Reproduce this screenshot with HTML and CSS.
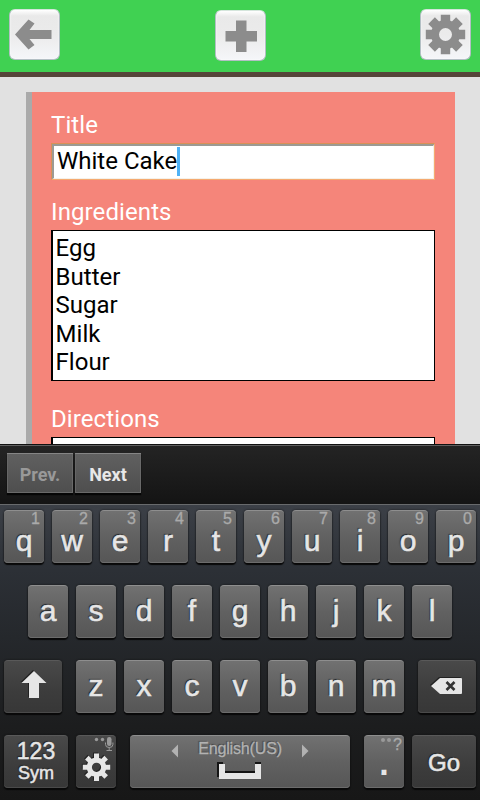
FILE: index.html
```html
<!DOCTYPE html>
<html lang="en">
  <head>
    <meta charset="utf-8" />
    <title>Edit recipe</title>
    <link rel="stylesheet" href="styles.css">
  </head>

  <body>
    <div class="screen">
      <header class="header">
        <div class="header-btn">
          <svg width="51" height="51" viewBox="0 0 51 51">
            <path d="M6 25.500L19.500 10.500L25.500 14.500L20.500 21H42.500V30H20.500L25.500 36L19.500 40.500Z" />
          </svg>
        </div>
        <div class="header-btn header-btn-add">
          <svg width="51" height="51" viewBox="0 0 51 51">
            <path d="M21 10.500h10.500v10.500h10.500v10.500h-10.500v10.500h-10.500v-10.500h-10.500v-10.500h10.500z" />
          </svg>
        </div>
        <div class="header-btn">
          <svg width="51" height="51" viewBox="0 0 51 51">
            <g transform="translate(25.500 25.500)">
              <circle r="10.500" fill="none" stroke="#8c8c8c" stroke-width="8" />
              <path id="tooth" d="M-4.700 -19.700h9.400v8h-9.400zM-4.700 11.700h9.400v8h-9.400z" />
              <use href="#tooth" transform="rotate(45)" />
              <use href="#tooth" transform="rotate(90)" />
              <use href="#tooth" transform="rotate(135)" />
            </g>
          </svg>
        </div>
      </header>

      <main class="content">
        <form class="recipe">
          <div class="label">Title</div>
          <div class="title-input"><span>White Cake</span><i class="caret"></i></div>
          <div class="label label-ingredients">Ingredients</div>
          <div class="textarea">Egg<br />Butter<br />Sugar<br />Milk<br />Flour</div>
          <div class="label label-directions">Directions</div>
          <div class="textarea"></div>
        </form>
      </main>

      <div class="assist">
        <div class="assist-btn disabled">Prev.</div>
        <div class="assist-btn">Next</div>
      </div>

      <div class="keyboard">
        <div class="row row-top">
          <div class="key">q<span class="hint">1</span></div>
          <div class="key">w<span class="hint">2</span></div>
          <div class="key">e<span class="hint">3</span></div>
          <div class="key">r<span class="hint">4</span></div>
          <div class="key">t<span class="hint">5</span></div>
          <div class="key">y<span class="hint">6</span></div>
          <div class="key">u<span class="hint">7</span></div>
          <div class="key">i<span class="hint">8</span></div>
          <div class="key">o<span class="hint">9</span></div>
          <div class="key">p<span class="hint">0</span></div>
        </div>

        <div class="row row-home">
          <div class="key">a</div>
          <div class="key">s</div>
          <div class="key">d</div>
          <div class="key">f</div>
          <div class="key">g</div>
          <div class="key">h</div>
          <div class="key">j</div>
          <div class="key">k</div>
          <div class="key">l</div>
        </div>

        <div class="row">
          <div class="key dark key-shift">
            <svg class="icon" width="58" height="53" viewBox="0 0 58 53">
              <path d="M30 11L42.500 23H35V38H25V23H17.500Z" />
            </svg>
          </div>
          <div class="key">z</div>
          <div class="key">x</div>
          <div class="key">c</div>
          <div class="key">v</div>
          <div class="key">b</div>
          <div class="key">n</div>
          <div class="key">m</div>
          <div class="key dark key-delete">
            <svg class="icon" width="58" height="53" viewBox="0 0 58 53">
              <path d="M13 26L22 18H43Q44 18 44 19V33Q44 34 43 34H22Z" />
              <path class="cross" d="M28.500 22L36.500 30M36.500 22L28.500 30" />
            </svg>
          </div>
        </div>

        <div class="row">
          <div class="key dark key-sym"><span class="num">123</span><span class="sym">Sym</span></div>
          <div class="key dark">
            <svg class="icon" width="40" height="53" viewBox="0 0 40 53">
              <g transform="translate(20.500 32.300)">
                <circle r="7.200" fill="none" stroke="#e6e6e6" stroke-width="5.200" />
                <path id="cog" d="M-2.500 -13.700h5v6h-5zM-2.500 7.700h5v6h-5z" />
                <use href="#cog" transform="rotate(45)" />
                <use href="#cog" transform="rotate(90)" />
                <use href="#cog" transform="rotate(135)" />
              </g>
            </svg>
            <svg class="mic" width="20" height="15" viewBox="0 0 20 15">
              <circle cx="2.500" cy="3.500" r="1.700" />
              <circle cx="8.500" cy="3.500" r="1.700" />
              <rect x="13" y="1" width="4.500" height="9" rx="2.200" />
              <path d="M11.500 6.500v2q0 3 3.700 3t3.700 -3v-2M15.200 11.500v2.500M12.500 14.500h5.500" fill="none" stroke="#999" />
            </svg>
          </div>
          <div class="key key-space">
            <div class="language">
              <svg width="8" height="14" viewBox="0 0 8 14"><path d="M7 0.500V13.500L0.500 7Z" /></svg>
              <span>English(US)</span>
              <svg width="8" height="14" viewBox="0 0 8 14"><path d="M1 0.500V13.500L7.500 7Z" /></svg>
            </div>
            <svg class="space-icon" width="46" height="18" viewBox="0 0 46 18">
              <path class="space-shadow" d="M0 0h6v9h32v-9h6v15h-44z" />
              <path d="M2 2h6v9h30v-9h6v15h-42z" />
            </svg>
          </div>
          <div class="key key-dot">.<span class="hint hint-dot"><i></i><i></i>?</span></div>
          <div class="key dark key-go">Go</div>
        </div>
      </div>
    </div>
  </body>
</html>
```

FILE: styles.css
```css
:root {
  --font: Roboto, Arial, sans-serif;
  --key-font: "Liberation Sans", Arial, sans-serif;
}

* {
  box-sizing: border-box;
}

body {
  margin: 0;
  font-family: var(--font);
}

.screen {
  display: flex;
  flex-direction: column;
  width: 480px;
  height: 800px;
  overflow: hidden;
  background: #e1e1e1;
}

.header {
  display: flex;
  flex: none;
  justify-content: space-between;
  height: 77px;
  padding: 9px 9px 0;
  background: #40d152;
  border-bottom: 5px solid #56453a;
}

.header-btn {
  width: 51px;
  height: 51px;
  border: 1px solid #b3bfc4;
  border-top-color: #d5e5dc;
  border-radius: 6px;
  background: linear-gradient(#fff, #e9e9e9 12%, #ebebeb 50%, #f5f6f9);
  box-shadow: inset 0 0 2px #fff;
}

.header-btn svg {
  display: block;
  margin: -1px;
  fill: #8c8c8c;
}

.header-btn-add {
  margin-top: 1px;
}

.content {
  flex: 1;
  min-height: 0;
  overflow: hidden;
  padding: 15px 25px 0 26px;
}

.recipe {
  height: 600px;
  padding: 19px 20px 0 19px;
  border-left: 6px solid #aaa;
  background: #f5857a;
}

.label {
  height: 32px;
  font-size: 24px;
  line-height: 28px;
  letter-spacing: 0.1px;
  color: #fff;
}

.label-ingredients {
  height: 32px;
  margin-top: 18px;
}

.label-directions {
  margin-top: 24px;
}

.title-input {
  display: flex;
  height: 37px;
  padding: 1px 0 0 3px;
  border: 3px solid;
  border-color: #9c9a94 #f5f1ea #f5f1ea #9c9a94;
  border-bottom-width: 2px;
  border-right-width: 2px;
  background: #fff;
  outline: 1px solid rgba(245, 140, 60, 0.7);
  outline-offset: -1px;
  font-size: 24px;
  line-height: 28px;
}

.caret {
  width: 3px;
  height: 29px;
  background: #4fb2f6;
}

.textarea {
  height: 151px;
  padding: 3.4px 3px 3px 2.6px;
  border: 1px solid #000;
  border-left-width: 2px;
  background: #fff;
  font-size: 24px;
  line-height: 28.4px;
}

/* form assistant above the keyboard */
.assist {
  display: flex;
  flex: none;
  gap: 2px;
  height: 60px;
  padding: 7px;
  border-top: 1px solid #111;
  background: linear-gradient(#242424, #141414);
  box-shadow: inset 0 1px #606060;
}

.assist-btn {
  width: 66px;
  height: 40px;
  margin-top: 1px;
  border-top: 1px solid #858585;
  background: linear-gradient(#606060, #4e4e4e);
  box-shadow: 0 2px 1px #050505, inset 1px 0 #666, inset -1px -1px #696969;
  font-size: 18px;
  font-weight: 700;
  line-height: 42px;
  text-align: center;
  color: #e8e8e8;
}

.assist-btn.disabled {
  color: #999;
}

.keyboard {
  display: flex;
  flex: none;
  flex-direction: column;
  gap: 22px;
  height: 296px;
  padding: 5px 4px 0;
  border-top: 1px solid #686a6c;
  background: linear-gradient(#3c4047, #2c3036 22%, #25282c 45%, #1c1d1e 75%, #171717);
}

.row {
  display: flex;
  justify-content: space-between;
  height: 53px;
}

.row-home {
  padding: 0 24px;
}

.key {
  position: relative;
  width: 40px;
  height: 53px;
  border-top: 1px solid #8e8e8e;
  border-radius: 4px;
  background: linear-gradient(#717171, #616161 50%, #565656);
  box-shadow: 0 2px 1px #080808, 0 0 2px #111, inset 0 -1px #6c6c6c;
  font-family: var(--key-font);
  font-size: 30px;
  line-height: 50px;
  text-align: center;
  color: #e6e6e6;
  -webkit-text-stroke: 0.6px #e6e6e6;
  text-shadow: -1px -1px 1px #222;
}

.row-top .key {
  line-height: 60px;
}

.hint {
  position: absolute;
  top: -1px;
  right: 4px;
  font-size: 16px;
  line-height: 17px;
  color: #aaa;
  -webkit-text-stroke: 0.3px #aaa;
  text-shadow: none;
}

.dark {
  border-top-color: #595959;
  background: linear-gradient(#494949, #3c3c3c 60%, #373737);
  box-shadow: 0 2px 1px #080808, 0 0 2px #111, inset 0 -1px #4a4a4a;
}

.key svg {
  fill: #e6e6e6;
}

.icon {
  display: block;
  margin-top: -1px;
  filter: drop-shadow(-1px -1px 0 #222);
}

.key .cross {
  stroke: #333;
  stroke-width: 2.6;
}

.key-shift {
  width: 58px;
  margin-right: 6px;
}

.key-delete {
  width: 58px;
  margin-left: 6px;
}

.key-sym {
  display: flex;
  flex-direction: column;
  align-items: center;
  width: 64px;
  padding-top: 2px;
  -webkit-text-stroke-width: 0.5px;
}

.num {
  font-size: 23px;
  line-height: 26px;
}

.sym {
  font-size: 18px;
  line-height: 18px;
}

.key .mic {
  position: absolute;
  top: 0;
  right: 2px;
  fill: #999;
}

.key-space {
  width: 220px;
  margin: 0 6px;
}

.language {
  display: flex;
  align-items: center;
  justify-content: space-between;
  width: 138px;
  height: 24px;
  margin: 0 auto;
  padding-top: 2px;
  font-size: 16px;
  line-height: 20px;
  letter-spacing: -0.15px;
  color: #b2b2b2;
  -webkit-text-stroke: 0.3px #b2b2b2;
  text-shadow: -1px -1px 1px #444;
}

.language span {
  margin-top: -1px;
}

.key .language svg {
  margin-top: 4px;
  fill: #b2b2b2;
}

.space-icon {
  display: block;
  margin: 2px auto 0;
}

.key .space-shadow {
  fill: #151515;
}

.key-dot {
  line-height: 56px;
  -webkit-text-stroke-width: 2px;
}

.hint-dot {
  display: flex;
  right: 2px;
  top: 0;
}

.hint-dot i {
  width: 4px;
  height: 4px;
  margin: 2px 2px 0 0;
  border-radius: 2px;
  background: #999;
}

.key-go {
  width: 64px;
  font-size: 24px;
  line-height: 53px;
}
```
